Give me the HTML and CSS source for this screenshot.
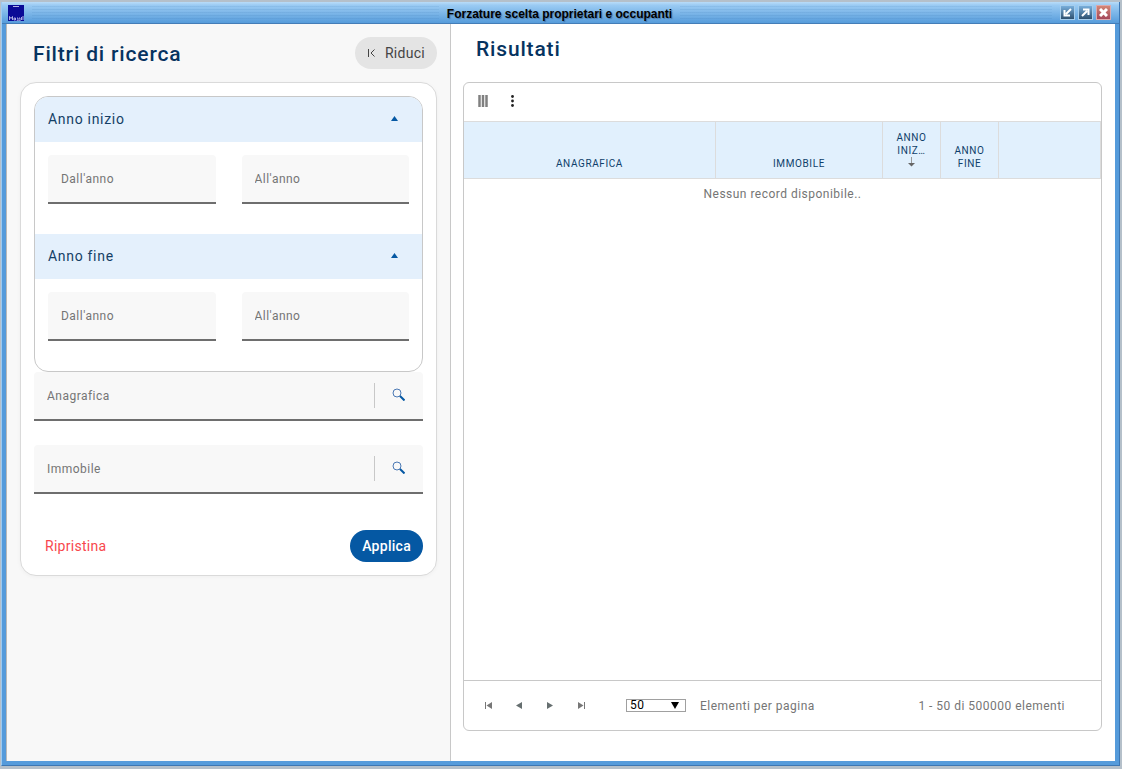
FILE: index.html
```html
<!DOCTYPE html>
<html lang="it">
<head>
<meta charset="utf-8">
<meta name="viewport" content="width=device-width, initial-scale=1">
<title>Forzature scelta proprietari e occupanti</title>
<link rel="stylesheet" href="styles.css">
</head>
<body>
<div class="window">
  <header class="titlebar">
    <div class="titlebar-side">
      <svg class="app-icon" width="16" height="16" viewBox="0 0 16 16" aria-hidden="true">
        <rect width="16" height="16" fill="#0a0a96"/>
        <path d="M5 1.500h6" stroke="#b4b4e6"/>
        <path d="M1.500 15v-3.500l1.500 2 1.500-2V15M6 13h1.500v2H6zM9 13h1v3H8.500M11 13h1v3h-1.500M13.500 12v3M15 11v4" fill="none" stroke="#d4d4f6" stroke-width=".8"/>
      </svg>
      <div class="grip"></div>
    </div>
    <h1 class="window-title">Forzature scelta proprietari e occupanti</h1>
    <div class="titlebar-side">
      <div class="grip"></div>
      <div class="window-buttons">
        <button class="window-button" type="button" aria-label="Riduci finestra">
          <svg width="9" height="9" viewBox="0 0 9 9"><path d="M8 1 3 6M1.500 2v5.500H7" fill="none" stroke="currentColor" stroke-width="2"/></svg>
        </button>
        <button class="window-button" type="button" aria-label="Ingrandisci finestra">
          <svg width="9" height="9" viewBox="0 0 9 9"><path d="M1 8 6 3M2 1.500h5.500V7" fill="none" stroke="currentColor" stroke-width="2"/></svg>
        </button>
        <button class="window-button window-button-close" type="button" aria-label="Chiudi finestra">
          <svg width="9" height="9" viewBox="0 0 9 9"><path d="m1 1 7 7M8 1 1 8" fill="none" stroke="currentColor" stroke-width="3"/></svg>
        </button>
      </div>
    </div>
  </header>

  <div class="content">
    <aside class="filters">
      <div class="filters-head">
        <h2 class="heading">Filtri di ricerca</h2>
        <button class="collapse" type="button">
          <svg width="8" height="8" viewBox="0 0 8 8" aria-hidden="true"><path d="M1.500 0v8M7.500 .5 4 4l3.500 3.500" fill="none" stroke="currentColor"/></svg>
          Riduci
        </button>
      </div>

      <form class="card">
        <div class="accordion">
          <section>
            <button class="accordion-head" type="button" aria-expanded="true">
              Anno inizio
              <svg width="7" height="5" viewBox="0 0 7 5" aria-hidden="true"><path d="M3.500 0 7 5H0z" fill="#0558a3"/></svg>
            </button>
            <div class="accordion-body">
              <input class="field" type="text" placeholder="Dall'anno" aria-label="Anno inizio, dall'anno">
              <input class="field" type="text" placeholder="All'anno" aria-label="Anno inizio, all'anno">
            </div>
          </section>
          <section>
            <button class="accordion-head" type="button" aria-expanded="true">
              Anno fine
              <svg width="7" height="5" viewBox="0 0 7 5" aria-hidden="true"><path d="M3.500 0 7 5H0z" fill="#0558a3"/></svg>
            </button>
            <div class="accordion-body">
              <input class="field" type="text" placeholder="Dall'anno" aria-label="Anno fine, dall'anno">
              <input class="field" type="text" placeholder="All'anno" aria-label="Anno fine, all'anno">
            </div>
          </section>
        </div>

        <div class="lookups">
          <div class="lookup">
            <input class="lookup-input" type="text" placeholder="Anagrafica" aria-label="Anagrafica">
            <button class="lookup-button" type="button" aria-label="Cerca anagrafica">
              <svg width="13" height="13" viewBox="0 0 13 13"><circle cx="5" cy="5" r="4" fill="none" stroke="#4a78b4"/><path d="m8 8 4.500 4.500" stroke="#0558a3" stroke-width="2"/></svg>
            </button>
          </div>
          <div class="lookup">
            <input class="lookup-input" type="text" placeholder="Immobile" aria-label="Immobile">
            <button class="lookup-button" type="button" aria-label="Cerca immobile">
              <svg width="13" height="13" viewBox="0 0 13 13"><circle cx="5" cy="5" r="4" fill="none" stroke="#4a78b4"/><path d="m8 8 4.500 4.500" stroke="#0558a3" stroke-width="2"/></svg>
            </button>
          </div>
        </div>

        <div class="actions">
          <button class="reset" type="reset">Ripristina</button>
          <button class="apply" type="button">Applica</button>
        </div>
      </form>
    </aside>

    <main class="results">
      <h2 class="heading">Risultati</h2>
      <div class="grid">
        <div class="toolbar">
          <button class="tool" type="button" aria-label="Colonne">
            <svg width="10" height="12" viewBox="0 0 10 12"><path d="M1.500 0v12M5 0v12M8.500 0v12" stroke="#808080" stroke-width="2.500"/></svg>
          </button>
          <button class="tool" type="button" aria-label="Altre opzioni">
            <svg width="3" height="12" viewBox="0 0 3 12"><circle cx="1.500" cy="1.500" r="1.400" fill="#222"/><circle cx="1.500" cy="6" r="1.400" fill="#222"/><circle cx="1.500" cy="10.500" r="1.400" fill="#222"/></svg>
          </button>
        </div>
        <div class="table-area">
          <table class="table">
            <colgroup><col class="col-name"><col class="col-building"><col class="col-year"><col class="col-year"><col></colgroup>
            <thead>
              <tr>
                <th scope="col">Anagrafica</th>
                <th scope="col">Immobile</th>
                <th class="sorted" scope="col" aria-sort="ascending">Anno Iniz…
                  <svg class="sort" width="7" height="10" viewBox="0 0 7 10" aria-hidden="true"><path d="M3.500 0v8" stroke="#999"/><path d="M0 6h7L3.500 9.500z" fill="#666"/></svg>
                </th>
                <th scope="col">Anno Fine</th>
                <td></td>
              </tr>
            </thead>
            <tbody>
              <tr><td class="empty" colspan="5">Nessun record disponibile..</td></tr>
            </tbody>
          </table>
        </div>
        <footer class="pager">
          <div class="pager-buttons">
            <button class="page" type="button" aria-label="Prima pagina"><svg width="7" height="7" viewBox="0 0 7 7"><path d="M.5 0v7" stroke="#777"/><path d="M7 0v7L1.500 3.500z" fill="#777"/></svg></button>
            <button class="page" type="button" aria-label="Pagina precedente"><svg width="6" height="7" viewBox="0 0 6 7"><path d="M6 0v7L0 3.500z" fill="#666f70"/></svg></button>
            <button class="page" type="button" aria-label="Pagina successiva"><svg width="6" height="7" viewBox="0 0 6 7"><path d="M0 0v7l6-3.500z" fill="#666f70"/></svg></button>
            <button class="page" type="button" aria-label="Ultima pagina"><svg width="7" height="7" viewBox="0 0 7 7"><path d="M6.500 0v7" stroke="#777"/><path d="M0 0v7l5.500-3.500z" fill="#777"/></svg></button>
          </div>
          <div class="size">
            <select class="size-select" id="page-size"><option>50</option></select>
            <svg class="size-arrow" width="8" height="7" viewBox="0 0 8 7" aria-hidden="true"><path d="M0 0h8L4 7z"/></svg>
          </div>
          <label for="page-size">Elementi per pagina</label>
          <span class="count">1 - 50 di 500000 elementi</span>
        </footer>
      </div>
    </main>
  </div>
</div>
</body>
</html>
```
FILE: styles.css
```css
* {
  box-sizing: border-box;
}

body {
  margin: 0;
  padding: 2px 2px 3px 1px;
  height: 100vh;
  background: #b5c0ca;
  font-family: Roboto, "Liberation Sans", sans-serif;
  font-size: 12px;
  color: #757575;
}

button,
input,
select {
  font: inherit;
  letter-spacing: inherit;
}

button {
  border: 0;
  padding: 0;
  background: none;
}

svg {
  display: block;
  flex: none;
}

h1,
h2 {
  margin: 0;
}

/* Window frame */
.window {
  display: flex;
  flex-direction: column;
  height: 100%;
  padding: 0 4px 4px;
  background: #559bdb;
  border: solid #3d77b3;
  border-width: 0 1px 1px 0;
  border-left: 1px solid #9ccaf2;
}

.titlebar {
  display: grid;
  grid-template-columns: 1fr auto 1fr;
  align-items: center;
  gap: 8px;
  flex: none;
  height: 22px;
  margin: 0 -4px;
  padding: 0 8px 0 6px;
  background: linear-gradient(#b9dcf8, #9bcbf3 15%, #569cdb);
  border-bottom: 1px solid #447db7;
}

.titlebar-side {
  display: flex;
  align-items: center;
  gap: 8px;
}

.grip {
  flex: 1;
  height: 14px;
  background: repeating-linear-gradient(rgba(40, 100, 160, .1) 0 1px, transparent 1px 3px);
}

.window-title {
  padding-top: 2px;
  font: bold 12px/16px "Liberation Sans", Arial, sans-serif;
  color: #000;
  text-shadow: 1px 1px 1px rgba(40, 70, 110, .5);
}

.window-buttons {
  display: flex;
  gap: 3px;
}

.window-button {
  display: grid;
  place-items: center;
  width: 15px;
  height: 15px;
  color: #fff;
  background: linear-gradient(#78aedb, #2e506f);
  border: 1px solid #a6cdec;
}

.window-button-close {
  background: linear-gradient(#d28676, #a44759);
  border-color: #dda9ad;
}

.content {
  display: flex;
  flex: 1;
  min-height: 0;
  background: #fff;
  border-left: 1px solid #b9b9b9;
  letter-spacing: 0.04em;
}

/* Filters */
.filters {
  flex: 0 0 444px;
  padding: 13px;
  background: #f8f8f8;
  border-right: 1px solid #c8c8c8;
}

.filters-head {
  display: flex;
  align-items: center;
  justify-content: space-between;
  padding-left: 13px;
  margin-bottom: 13px;
}

.heading {
  font-size: 21px;
  line-height: 24px;
  font-weight: 500;
  letter-spacing: 0.04em;
  color: #063360;
}

.filters .heading {
  padding-top: 2px;
}

.collapse {
  display: flex;
  align-items: center;
  gap: 10px;
  height: 32px;
  padding: 0 12px;
  border-radius: 16px;
  background: #e4e4e4;
  color: #444;
  font-size: 14px;
  letter-spacing: 0.02em;
}

.card {
  padding: 13px;
  background: #fff;
  border: 1px solid #dadada;
  border-radius: 16px;
  box-shadow: 0 1px 4px rgba(0, 0, 0, .04);
}

.accordion {
  overflow: hidden;
  border: 1px solid #c8c8c8;
  border-radius: 14px;
}

.accordion-head {
  display: flex;
  align-items: center;
  justify-content: space-between;
  width: 100%;
  height: 45px;
  padding: 0 24px 2px 13px;
  background: #e4f0fc;
  color: #143f66;
  font-size: 14px;
  letter-spacing: 0.05em;
}

.accordion-body {
  display: grid;
  grid-template-columns: 1fr 1fr;
  gap: 26px;
  padding: 13px 13px 30px;
}

.field,
.lookup {
  width: 100%;
  min-width: 0;
  height: 49px;
  border: 0;
  border-bottom: 2px solid #6e6e6e;
  border-radius: 4px 4px 0 0;
  background: #f8f8f8;
}

.field {
  padding: 0 13px;
}

::placeholder {
  color: #757575;
  opacity: 1;
}

.lookups {
  display: grid;
  gap: 24px;
}

.lookup {
  display: flex;
  align-items: center;
}

.lookup-input {
  flex: 1;
  min-width: 0;
  border: 0;
  padding: 0 13px;
  background: none;
}

.lookup-button {
  display: grid;
  place-items: center;
  width: 49px;
  height: 25px;
  padding: 0 2px 2px 0;
  border-left: 1px solid #c8c8c8;
}

.actions {
  display: flex;
  align-items: center;
  justify-content: space-between;
  margin-top: 36px;
  font-size: 14px;
  letter-spacing: 0.02em;
}

.reset {
  padding: 0 11px;
  height: 32px;
  color: #f8474d;
}

.apply {
  height: 32px;
  padding: 0 12px;
  border-radius: 16px;
  background: #0558a3;
  color: #fff;
  font-weight: 500;
}

/* Results */
.results {
  display: flex;
  flex: 1;
  flex-direction: column;
  min-width: 0;
  padding: 13px 13px 30px 12px;
}

.results .heading {
  padding-left: 13px;
  margin-bottom: 21px;
}

.grid {
  display: flex;
  flex: 1;
  flex-direction: column;
  min-height: 0;
  overflow: hidden;
  border: 1px solid #c8c8c8;
  border-radius: 6px;
}

.toolbar {
  display: flex;
  align-items: center;
  gap: 23px;
  height: 38px;
  padding: 0 14px 2px;
}

.table-area {
  flex: 1;
  overflow: auto;
}

.table {
  width: 100%;
  table-layout: fixed;
  border-spacing: 0;
}

.col-name {
  width: 252px;
}

.col-building {
  width: 167px;
}

.col-year {
  width: 58px;
}

.table thead th,
.table thead td {
  height: 58px;
  padding: 7px 8px 8px;
  vertical-align: bottom;
  background: #e1f0fd;
  border: solid #dcdcdc;
  border-width: 1px 1px 1px 0;
  color: #0f3f6b;
  font-size: 10px;
  line-height: 13px;
  font-weight: 400;
  letter-spacing: 0.06em;
  text-transform: uppercase;
}

.table thead .sorted {
  padding-bottom: 11px;
}

.sort {
  margin: 0 auto;
}

.empty {
  padding: 7px 0;
  line-height: 16px;
  text-align: center;
}

.pager {
  display: flex;
  align-items: center;
  height: 50px;
  padding: 0 36px 0 16px;
  border-top: 1px solid #c8c8c8;
}

.pager-buttons {
  display: flex;
  gap: 15px;
  margin-right: 37px;
}

.page {
  display: grid;
  place-items: center;
  width: 16px;
  height: 16px;
}

.size {
  position: relative;
  margin-right: 14px;
}

.size-select {
  display: block;
  width: 60px;
  height: 13px;
  padding: 0 3px;
  line-height: 11px;
  appearance: none;
  border: 1px solid #a0a0a0;
  border-radius: 0;
  background: #fff;
  color: #000;
}

.size-arrow {
  position: absolute;
  top: 3px;
  right: 7px;
}

.count {
  margin-left: auto;
}
```
